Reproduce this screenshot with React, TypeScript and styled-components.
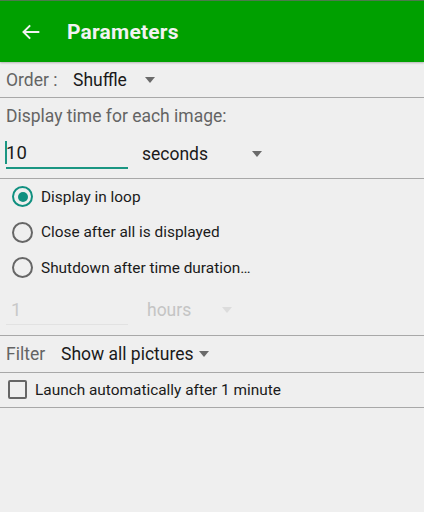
import styled, { createGlobalStyle } from "styled-components";

const GlobalStyle = createGlobalStyle`
  html, body {
    margin: 0;
    padding: 0;
    background: #efefef;
    font-family: Roboto, "Noto Sans", sans-serif;
  }
`;

const Page = styled.div`
  width: 424px;
  height: 512px;
  background: #efefef;
  overflow: hidden;
`;

const Header = styled.div`
  height: 61px;
  background: #00a000;
  border-top: 1px solid #4d7a4d;
  box-shadow: 0 1px 2px rgba(0, 0, 0, 0.25);
  display: flex;
  align-items: center;
  color: #f2f2f2;
`;

const BackButton = styled.div`
  width: 67px;
  display: flex;
  align-items: center;
  padding-left: 21px;
  box-sizing: border-box;
`;

const Title = styled.h1`
  margin: 0;
  font-size: 21px;
  font-weight: 700;
  letter-spacing: 0.2px;
`;

const Section = styled.div<{ $pad?: string }>`
  border-bottom: 1px solid #a8a8a8;
  padding: ${(p) => p.$pad || "0"};
`;

const Row = styled.div<{ $h: number }>`
  display: flex;
  align-items: center;
  height: ${(p) => p.$h}px;
  padding-left: 6px;
`;

const Label = styled.span<{ $w?: number }>`
  color: #646464;
  font-size: 17.5px;
  width: ${(p) => (p.$w ? `${p.$w}px` : "auto")};
`;

const Spinner = styled.div<{ $w?: number; $gap?: number; $disabled?: boolean }>`
  display: flex;
  align-items: center;
  justify-content: ${(p) => (p.$w ? "space-between" : "flex-start")};
  width: ${(p) => (p.$w ? `${p.$w}px` : "auto")};
  font-size: 17.5px;
  color: ${(p) => (p.$disabled ? "#c4c4c4" : "#1a1a1a")};
  gap: ${(p) => p.$gap ?? 12}px;
`;

const Caret = styled.span<{ $disabled?: boolean }>`
  width: 0;
  height: 0;
  border-left: 5.5px solid transparent;
  border-right: 5.5px solid transparent;
  border-top: 6px solid ${(p) => (p.$disabled ? "#dcdcdc" : "#6a6a6a")};
`;

const TextInput = styled.div<{ $disabled?: boolean }>`
  width: 122px;
  height: 30px;
  margin-right: ${(p) => (p.$disabled ? "19px" : "14px")};
  display: flex;
  align-items: center;
  font-size: 18.5px;
  color: ${(p) => (p.$disabled ? "#c8c8c8" : "#1a1a1a")};
  border-bottom: ${(p) => (p.$disabled ? "1px solid #e2e2e2" : "2px solid #1a9682")};
  padding-left: ${(p) => (p.$disabled ? "5px" : "0")};
  box-sizing: border-box;
`;

const Cursor = styled.span`
  display: inline-block;
  width: 2px;
  height: 23px;
  background: #1a9682;
  margin-left: -1px;
  margin-right: -1px;
`;

const RadioRow = styled.div`
  display: flex;
  align-items: center;
  height: 35.5px;
  padding-left: 12px;
  font-size: 15.4px;
  color: #1a1a1a;
  gap: 8px;
`;

const RadioCircle = styled.span<{ $checked?: boolean }>`
  width: 17px;
  height: 17px;
  border-radius: 50%;
  border: 2px solid ${(p) => (p.$checked ? "#109080" : "#666")};
  display: flex;
  align-items: center;
  justify-content: center;

  &::after {
    content: "";
    width: 10px;
    height: 10px;
    border-radius: 50%;
    background: ${(p) => (p.$checked ? "#109080" : "transparent")};
  }
`;

const CheckRow = styled.div`
  display: flex;
  align-items: center;
  height: 34px;
  padding-left: 8px;
  font-size: 15.4px;
  color: #1a1a1a;
  gap: 8px;
`;

const CheckBox = styled.span`
  width: 15px;
  height: 15px;
  border: 2px solid #666;
  border-radius: 2px;
`;

export default function App() {
  return (
    <Page>
      <GlobalStyle />
      <Header>
        <BackButton>
          <svg width="20" height="20" viewBox="0 0 24 24" fill="none" stroke="#f2f2f2" strokeWidth="2.4">
            <path d="M22 12H3M11 4l-8 8 8 8" />
          </svg>
        </BackButton>
        <Title>Parameters</Title>
      </Header>

      <Section>
        <Row $h={35}>
          <Label $w={67}>Order :</Label>
          <Spinner $gap={18}>
            Shuffle <Caret />
          </Spinner>
        </Row>
      </Section>

      <Section $pad="0 0 5px">
        <Row $h={36}>
          <Label>Display time for each image:</Label>
        </Row>
        <Row $h={39}>
          <TextInput>
            <Cursor />10
          </TextInput>
          <Spinner $w={120}>
            seconds <Caret />
          </Spinner>
        </Row>
      </Section>

      <Section>
        <RadioRow>
          <RadioCircle $checked />
          Display in loop
        </RadioRow>
        <RadioRow>
          <RadioCircle />
          Close after all is displayed
        </RadioRow>
        <RadioRow>
          <RadioCircle />
          Shutdown after time duration…
        </RadioRow>
        <Row $h={49}>
          <TextInput $disabled>1</TextInput>
          <Spinner $w={85} $disabled>
            hours <Caret $disabled />
          </Spinner>
        </Row>
      </Section>

      <Section>
        <Row $h={36}>
          <Label $w={55}>Filter</Label>
          <Spinner $gap={5}>
            Show all pictures <Caret />
          </Spinner>
        </Row>
      </Section>

      <Section>
        <CheckRow>
          <CheckBox />
          Launch automatically after 1 minute
        </CheckRow>
      </Section>
    </Page>
  );
}
